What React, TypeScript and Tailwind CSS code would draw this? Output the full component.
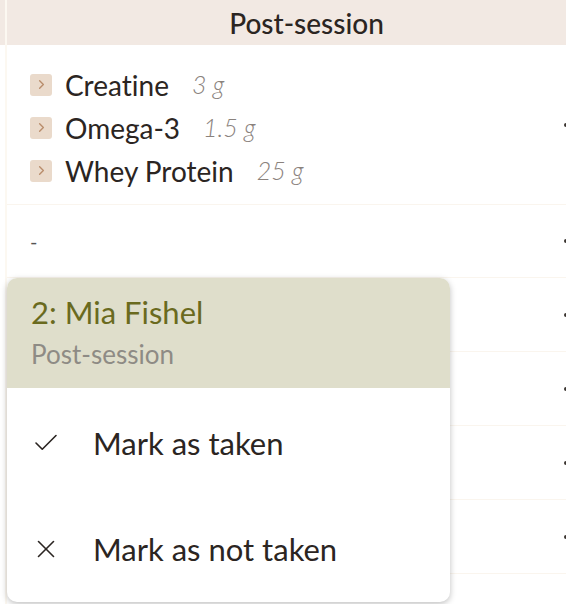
import React from 'react';
import { Check, X, ChevronRight } from 'lucide-react';

const supplements = [
  { name: 'Creatine', dose: '3 g' },
  { name: 'Omega-3', dose: '1.5 g' },
  { name: 'Whey Protein', dose: '25 g' },
];

// rows under the popup, only the edge of the next column shows
const emptyRows = [0, 1, 2, 3, 4];

const EdgeDot: React.FC = () => (
  <span className="absolute right-[-2px] top-1/2 -translate-y-1/2 w-[4px] h-[4px] rounded-full bg-[#3a3430]" />
);

const App: React.FC = () => {
  return (
    <div
      className="relative w-[566px] h-[604px] overflow-hidden bg-white text-[#2b2522] [font-variant-ligatures:none]"
      style={{ fontFamily: 'Lato, "Open Sans", sans-serif' }}
    >
      <div className="flex h-full">
        {/* left gutter */}
        <div className="w-[5px] shrink-0">
          <div className="h-[45px] bg-[#f2e9e3]" />
        </div>

        <div className="flex-1 flex flex-col border-l-2 border-[#fcf8f1]">
          <div className="h-[45px] shrink-0 bg-[#f2e9e3] flex items-center justify-center text-[28px] font-medium pl-[40px]">
            Post-session
          </div>

          {/* Supplements row */}
          <div className="relative h-[160px] shrink-0 border-b border-[#faf5ee] pl-[23px] pt-[18px]">
            {supplements.map((s) => (
              <div key={s.name} className="flex items-center h-[43px]">
                <span className="w-[22px] h-[22px] rounded-[3px] bg-[#eadacb] flex items-center justify-center mr-[13px]">
                  <ChevronRight size={15} strokeWidth={2.2} className="text-[#b98d6c]" />
                </span>
                <span className="text-[28px] leading-none">{s.name}</span>
                <span className="ml-[23px] text-[25px] italic font-light text-[#8a827d] leading-none">{s.dose}</span>
              </div>
            ))}
            <span className="absolute right-[-2px] top-[78px] w-[4px] h-[4px] rounded-full bg-[#3a3430]" />
          </div>

          {/* Empty row */}
          <div className="relative h-[73px] shrink-0 border-b border-[#faf5ee] flex items-center pl-[23px]">
            <span className="text-[20px] text-[#555]">-</span>
            <EdgeDot />
          </div>

          {emptyRows.map((i) => (
            <div key={i} className="relative h-[74px] shrink-0 border-b border-[#faf5ee]">
              {i < 4 && <EdgeDot />}
            </div>
          ))}
        </div>
      </div>

      {/* Popup menu */}
      <div className="absolute left-[7px] top-[278px] w-[443px] h-[324px] rounded-[10px] bg-white overflow-hidden shadow-[0_2px_6px_rgba(0,0,0,0.25)] flex flex-col">
        <div className="h-[110px] shrink-0 bg-[#dfdecb] px-[24px] pt-[14px]">
          <div className="text-[31px] leading-[40px] text-[#6a6a1e]">2: Mia Fishel</div>
          <div className="text-[26px] leading-[36px] text-[#8e8b85] mt-[4px]">Post-session</div>
        </div>
        <div className="flex-1 flex flex-col">
          <div className="h-[106px] flex items-center pl-[24px] pt-[4px]">
            <Check size={30} strokeWidth={1.3} className="text-[#2b2522]" />
            <span className="ml-[32px] text-[31px]">Mark as taken</span>
          </div>
          <div className="h-[106px] flex items-center pl-[24px] pt-[4px]">
            <X size={30} strokeWidth={1.3} className="text-[#2b2522]" />
            <span className="ml-[32px] text-[31px]">Mark as not taken</span>
          </div>
        </div>
      </div>
    </div>
  );
};

export default App;
